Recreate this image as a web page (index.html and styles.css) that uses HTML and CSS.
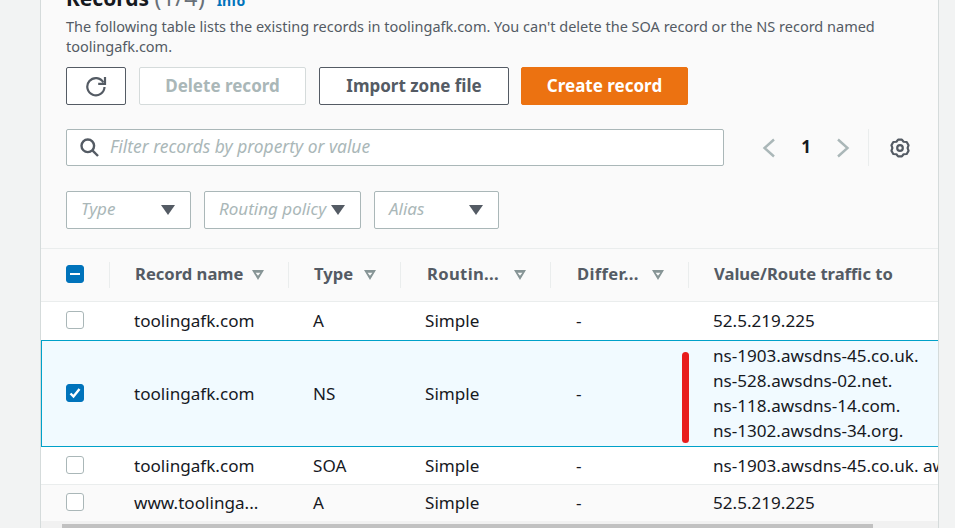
FILE: index.html
```html
<!DOCTYPE html>
<html lang="en">
<head>
<meta charset="utf-8">
<title>Records</title>
<link rel="stylesheet" href="styles.css">
</head>
<body>
<main class="panel">
  <section class="head">
    <h2 class="title">Records <span class="count">(1/4)</span> <a class="info">Info</a></h2>
    <p class="desc">The following table lists the existing records in toolingafk.com. You can't delete the SOA record or the NS record named toolingafk.com.</p>
    <div class="actions">
      <button class="btn btn-icon" aria-label="Refresh">
        <svg width="22" height="22" viewBox="0 0 22 22" fill="none" stroke="#545b64" stroke-width="2.2"><path d="M18.4 7.500A8.600 8.600 0 1 0 19.500 12"/><path d="M20 2v6.800h-6.800"/></svg>
      </button>
      <button class="btn btn-disabled"><span class="btn-label">Delete record</span></button>
      <button class="btn btn-normal"><span class="btn-label">Import zone file</span></button>
      <button class="btn btn-primary"><span class="btn-label">Create record</span></button>
    </div>
    <div class="search-row">
      <div class="search">
        <svg class="search-icon" width="19" height="19" viewBox="0 0 19 19" fill="none" stroke="#545b64" stroke-width="2.4"><circle cx="7.800" cy="7.800" r="6.300"/><path d="M12.400 12.400l5.600 5.600"/></svg>
        <span class="placeholder wide">Filter records by property or value</span>
      </div>
      <div class="pager">
        <svg width="14" height="20" viewBox="0 0 14 20" fill="none" stroke="#aab7b8" stroke-width="2.4"><path d="M12 1.500L2.500 10l9.500 8.500"/></svg>
        <span class="page">1</span>
        <svg width="14" height="20" viewBox="0 0 14 20" fill="none" stroke="#aab7b8" stroke-width="2.4"><path d="M2 1.500L11.500 10 2 18.500"/></svg>
      </div>
      <div class="settings">
        <svg width="20" height="20" viewBox="0 0 20 20" fill="none" stroke="#545b64" stroke-width="2.2" stroke-linejoin="round"><path d="M8.130 1.600h3.740l1.730 2.160 3.090.220 1.870 3.240-.96 2.780.96 2.780-1.870 3.240-3.090.220-1.730 2.160H8.130L6.400 16.240l-3.090-.220-1.870-3.240.960-2.780-.960-2.780 1.870-3.240 3.090-.220z"/><circle cx="10" cy="10" r="2.800"/></svg>
      </div>
    </div>
    <div class="filters">
      <div class="select select-type"><span class="placeholder up">Type</span><i class="caret"></i></div>
      <div class="select select-routing"><span class="placeholder up">Routing policy</span><i class="caret"></i></div>
      <div class="select select-alias"><span class="placeholder up">Alias</span><i class="caret"></i></div>
    </div>
  </section>

  <section class="table">
    <div class="row row-head">
      <div class="cell"><span class="check check-on check-minus"></span></div>
      <div class="cell th"><span class="th-label">Record name</span><i class="sort"></i></div>
      <div class="cell th"><span class="th-label">Type</span><i class="sort"></i></div>
      <div class="cell th th-cut"><span class="th-label">Routin...</span><i class="sort"></i></div>
      <div class="cell th th-cut"><span class="th-label">Differ...</span><i class="sort"></i></div>
      <div class="cell th"><span class="th-label">Value/Route traffic to</span></div>
    </div>
    <div class="row row-1">
      <div class="cell"><span class="check"></span></div>
      <div class="cell td">toolingafk.com</div>
      <div class="cell td">A</div>
      <div class="cell td">Simple</div>
      <div class="cell td td-dash">-</div>
      <div class="cell td">52.5.219.225</div>
    </div>
    <div class="row row-selected">
      <div class="cell"><span class="check check-on"><svg width="14" height="14" viewBox="0 0 14 14" fill="none" stroke="#fff" stroke-width="2.400"><path d="M2.500 7.500l3 3 6-7.500"/></svg></span></div>
      <div class="cell td">toolingafk.com</div>
      <div class="cell td">NS</div>
      <div class="cell td">Simple</div>
      <div class="cell td td-dash">-</div>
      <div class="cell td values"><div>ns-1903.awsdns-45.co.uk.</div><div>ns-528.awsdns-02.net.</div><div>ns-118.awsdns-14.com.</div><div>ns-1302.awsdns-34.org.</div></div>
      <span class="marker"></span>
    </div>
    <div class="row row-3">
      <div class="cell"><span class="check"></span></div>
      <div class="cell td">toolingafk.com</div>
      <div class="cell td">SOA</div>
      <div class="cell td">Simple</div>
      <div class="cell td td-dash">-</div>
      <div class="cell td nowrap">ns-1903.awsdns-45.co.uk. awsdns-hostmaster.amazon.com.</div>
    </div>
    <div class="row row-4">
      <div class="cell"><span class="check"></span></div>
      <div class="cell td">www.toolinga...</div>
      <div class="cell td">A</div>
      <div class="cell td">Simple</div>
      <div class="cell td td-dash">-</div>
      <div class="cell td">52.5.219.225</div>
    </div>
    <div class="scrollbar"><div class="thumb"></div></div>
  </section>
</main>
</body>
</html>
```
FILE: styles.css
```css
* { box-sizing: border-box; }
html, body { margin: 0; height: 100%; overflow: hidden; }
body {
  background: #f2f3f3;
  font-family: "Noto Sans", "Open Sans", sans-serif;
  color: #16191f;
  font-size: 17px;
}
.panel {
  margin-left: 40px;
  width: 899px;
  height: 528px;
  background: #fafafa;
  border-left: 1px solid #d5dbdb;
  border-right: 1px solid #d5dbdb;
  overflow: hidden;
}
.head { display: flow-root; padding: 0 25px; height: 248px; }
.title {
  margin: -16px 0 0;
  height: 27px;
  font-size: 21px;
  line-height: 27px;
  font-weight: 700;
  white-space: nowrap;
}
.count { font-weight: 400; color: #687078; font-size: 23px; letter-spacing: .4px; }
.info { font-size: 14px; color: #0073bb; font-weight: 700; margin-left: 6px; }
.desc {
  margin: 0;
  padding-top: 5px;
  font-size: 14.5px;
  line-height: 20px;
  color: #545b64;
  width: 830px;
}
.actions { display: flex; gap: 13px; margin-top: 11px; height: 38px; }
.btn {
  font-family: inherit;
  font-size: 17px;
  font-weight: 700;
  height: 38px;
  border-radius: 2px;
  padding: 0;
  background: #fff;
  display: flex;
  align-items: center;
  justify-content: center;
}
.btn-label { margin-top: -2px; }
.btn-icon { width: 60px; border: 1px solid #545b64; }
.btn-disabled { width: 167px; border: 1px solid #d5dbdb; color: #aab7b8; }
.btn-normal { width: 190px; border: 1px solid #545b64; color: #545b64; }
.btn-primary { width: 167px; border: 1px solid #ec7211; background: #ec7211; color: #fff; margin-left: -1px; }
.search-row { display: flex; align-items: center; margin-top: 24px; height: 37px; }
.search {
  width: 658px;
  height: 37px;
  background: #fff;
  border: 1px solid #aab7b8;
  border-radius: 2px;
  display: flex;
  align-items: center;
  gap: 11px;
  padding-left: 13px;
}
.placeholder { font-style: italic; color: #aab7b8; font-size: 17px; line-height: 23px; margin-top: -2px; }
.placeholder.wide { font-size: 17.4px; }
.placeholder.up { margin-top: -4px; }
.pager { display: flex; align-items: center; margin-left: 38px; width: 88px; justify-content: space-between; }
.page { font-weight: 700; font-size: 17px; margin-top: -2px; }
.settings { margin-left: 18px; padding-left: 21px; border-left: 1px solid #eaeded; height: 37px; display: flex; align-items: center; }
.filters { display: flex; gap: 13px; margin-top: 25px; }
.select {
  height: 38px;
  background: #fff;
  border: 1px solid #aab7b8;
  border-radius: 2px;
  display: flex;
  align-items: center;
  justify-content: space-between;
  padding: 0 15px 0 14px;
}
.select-type { width: 125px; }
.select-routing { width: 157px; }
.select-alias { width: 125px; }
.caret {
  width: 0; height: 0;
  border-left: 7px solid transparent;
  border-right: 7px solid transparent;
  border-top: 10px solid #545b64;
}
.table { position: relative; }
.row {
  display: grid;
  grid-template-columns: 69px 179px 112px 150px 138px 249px;
  position: relative;
  background: #fff;
}
.cell {
  display: flex;
  align-items: center;
  white-space: nowrap;
  overflow: hidden;
  min-width: 0;
}
.row-head {
  height: 54px;
  background: #fafafa;
  border-top: 1px solid #eaeded;
  border-bottom: 1px solid #eaeded;
}
.th {
  position: relative;
  padding: 0 25px;
  font-weight: 700;
  color: #545b64;
  font-size: 16.6px;
}
.th-label { margin-top: -4px; }
.th-cut { padding-left: 26px; }
.th-cut .th-label { letter-spacing: .35px; }
.th::before {
  content: "";
  position: absolute;
  left: -1px;
  top: 13px;
  height: 26px;
  width: 1px;
  background: #eaeded;
}
.row-head .th { overflow: visible; }
.sort {
  width: 12px;
  height: 10px;
  display: block;
  flex: none;
  margin-left: auto;
  background: #879596;
  clip-path: polygon(0 0, 100% 0, 50% 100%, 0 0, 30% 28%, 50% 58%, 70% 28%, 30% 28%);
}
.check {
  display: flex;
  align-items: center;
  justify-content: center;
  width: 18px;
  height: 18px;
  background: #fff;
  border: 1px solid #aab7b8;
  border-radius: 3px;
  margin-left: 25px;
  margin-bottom: 2px;
}
.check-on { background: #0073bb; border-color: #0073bb; }
.check-minus::before { content: ""; width: 10px; height: 2px; background: #fff; }
.td { padding: 0 0 1px 24px; color: #16191f; font-size: 17.1px; }
.td-dash { padding-left: 25px; }
.row-1 { height: 38px; }
.row-selected {
  height: 107px;
  background: #f1faff;
  box-shadow: inset 1px 1px 0 #00a1c9, inset 0 -1px 0 #00a1c9;
}
.row-3 { height: 38px; border-bottom: 1px solid #eaeded; }
.row-4 { height: 36px; background: #fafafa; }
.values { display: block; align-self: center; line-height: 25px; }
.nowrap { white-space: nowrap; }
.marker {
  position: absolute;
  left: 641px;
  top: 12px;
  width: 7px;
  height: 91px;
  background: #e81c1c;
  border-radius: 4px;
}
.scrollbar { height: 7px; background: #f1f1f1; padding: 3px 0 0 21px; }
.thumb { width: 811px; height: 4px; background: #c1c1c1; }
```
